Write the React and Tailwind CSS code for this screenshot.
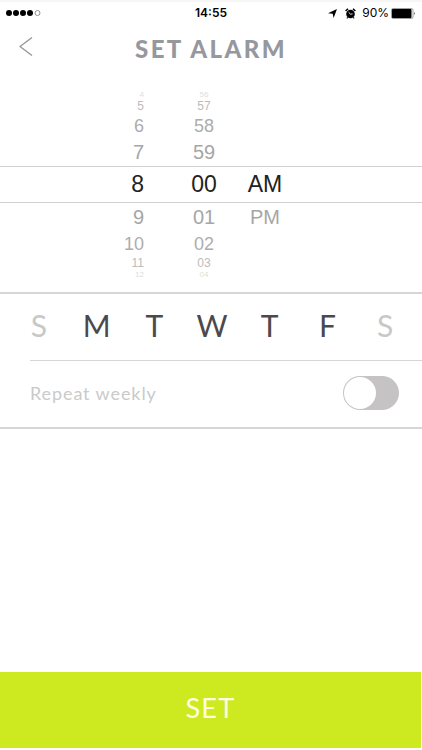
import { useState } from 'react'

const HOURS = Array.from({ length: 12 }, (_, i) => String(i + 1))
const MINUTES = Array.from({ length: 60 }, (_, i) => String(i).padStart(2, '0'))
const DAYS = ['Sunday', 'Monday', 'Tuesday', 'Wednesday', 'Thursday', 'Friday', 'Saturday']

// One entry per visible wheel row, fading away from the middle
const ROWS = [
  { offset: -4, style: 'h-[9px] text-[8px] text-[#dedede]' },
  { offset: -3, style: 'h-3.5 text-[12px] text-[#bcbcbc]' },
  { offset: -2, style: 'h-[25px] text-[18px] text-[#adadad]' },
  { offset: -1, style: 'h-7 text-[20px] text-[#a6a6a6]' },
  { offset: 0, style: 'h-[37px] text-[23px] text-[#222222] border-y border-[#d2d2d2]' },
  { offset: 1, style: 'h-7 text-[20px] text-[#a6a6a6]' },
  { offset: 2, style: 'h-[25px] text-[18px] text-[#adadad]' },
  { offset: 3, style: 'h-3.5 text-[12px] text-[#bcbcbc]' },
  { offset: 4, style: 'h-[9px] text-[8px] text-[#dedede]' },
]

function wrap(list, i) {
  const n = list.length
  return ((i % n) + n) % n
}

function StatusBar() {
  return (
    <div className="grid grid-cols-3 items-center h-6 pl-1.5 pr-1.5 border-t-2 border-[#f6f6f6] text-black">
      <svg width="36" height="8" viewBox="0 0 36 8">
        {[3, 10, 17, 24].map(cx => (
          <circle key={cx} cx={cx} cy="4" r="3" fill="#000" />
        ))}
        <circle cx="31.500" cy="4" r="2.500" fill="none" stroke="#777" strokeWidth="0.800" />
      </svg>
      <span className="text-center text-xs font-semibold font-['Inter',sans-serif]">14:55</span>
      <div className="flex items-center justify-end">
        <svg className="mr-2" width="9" height="9" viewBox="0 0 9 9">
          <path d="M9 0 L5.600 9 L4.700 4.700 L0 4.300 Z" fill="#000" />
        </svg>
        <svg className="mr-1.5" width="11" height="11" viewBox="0 0 11 11">
          <circle cx="5.500" cy="6" r="4.300" fill="#000" />
          <path d="M0.600 3 L3 0.800 M8 0.800 L10.400 3" stroke="#000" strokeWidth="1.500" />
          <path d="M2.700 9.300 L1.900 10.300 M8.300 9.300 L9.100 10.300" stroke="#000" strokeWidth="1.200" />
          <path d="M3.600 4.300 L5.500 6.200 L7.600 5.900" fill="none" stroke="#fff" strokeWidth="0.900" />
        </svg>
        <span className="mr-0.5 text-xs font-['Inter',sans-serif]">90%</span>
        <svg width="25" height="11" viewBox="0 0 25 11">
          <rect x="0.500" y="0.500" width="21.500" height="10" rx="1.500" fill="#fff" stroke="#888" strokeWidth="0.800" />
          <rect x="1" y="1" width="19.500" height="9" rx="0.800" fill="#000" />
          <path d="M23 3.800 Q24.800 5.500 23 7.200 Z" fill="#555" />
        </svg>
      </div>
    </div>
  )
}

function TimeWheel() {
  const [hour, setHour] = useState(7)
  const [minute, setMinute] = useState(0)
  const [period, setPeriod] = useState(0)

  return (
    <div className="py-[13px] font-['Liberation_Sans',Arial,sans-serif]">
      {ROWS.map(({ offset, style }) => {
        const h = wrap(HOURS, hour + offset)
        const m = wrap(MINUTES, minute + offset)
        const p = ['AM', 'PM'][period + offset]
        return (
          <div key={offset} className={`flex items-center justify-center pr-9 leading-none ${style}`}>
            <button type="button" className="w-11 mr-10 text-right" onClick={() => setHour(h)}>{HOURS[h]}</button>
            <button type="button" className="w-10 mr-5 text-center" onClick={() => setMinute(m)}>{MINUTES[m]}</button>
            <div className="w-[42px] text-center">
              {p && <button type="button" onClick={() => setPeriod(period + offset)}>{p}</button>}
            </div>
          </div>
        )
      })}
    </div>
  )
}

export default function App() {
  const [days, setDays] = useState([1, 2, 3, 4, 5])

  function toggleDay(i) {
    setDays(days.includes(i) ? days.filter(d => d !== i) : [...days, i])
  }

  return (
    <div className="flex flex-col min-h-screen bg-white font-['Lato',sans-serif]">
      <StatusBar />

      <header className="grid grid-cols-[52px_1fr_52px] items-center h-[53px]">
        <button type="button" aria-label="Back" className="pl-[19px] pb-2">
          <svg width="14" height="19" viewBox="0 0 14 19" fill="none" stroke="#939598" strokeWidth="1.300">
            <path d="M13 0.500 L1 9.500 L13 18.500" />
          </svg>
        </button>
        <h1 className="pb-1 text-center text-2xl font-black tracking-widest text-[#96989d]">SET ALARM</h1>
      </header>

      <main className="flex-1">
        <TimeWheel />

        <section className="border-y-2 border-[#d6d6d6]">
          <div className="grid grid-cols-7 h-[66px] pl-2.5 pr-2 pb-1">
            {DAYS.map((day, i) => (
              <button
                key={day}
                type="button"
                aria-label={day}
                aria-pressed={days.includes(i)}
                onClick={() => toggleDay(i)}
                className={`text-3xl ${days.includes(i) ? 'text-[#4a4a4c]' : 'text-[#c8c8c8]'}`}
              >
                {day[0]}
              </button>
            ))}
          </div>
          <div className="flex items-center justify-between h-[67px] ml-[30px] pr-[23px] pb-0.5 border-t border-[#d6d6d6]">
            <label htmlFor="repeat" className="text-lg tracking-wider text-[#cacaca]">Repeat weekly</label>
            <input
              id="repeat"
              type="checkbox"
              role="switch"
              className="appearance-none w-14 h-[34px] rounded-full bg-[#c6c3c5] p-px before:block before:size-8 before:rounded-full before:bg-white checked:bg-[#cdea20] checked:before:ml-auto"
            />
          </div>
        </section>
      </main>

      <button
        type="button"
        className="h-[76px] mr-px mb-0.5 pb-1 text-[27px] tracking-wider text-[#fdffe0] bg-[#cdea20]"
      >
        SET
      </button>
    </div>
  )
}
